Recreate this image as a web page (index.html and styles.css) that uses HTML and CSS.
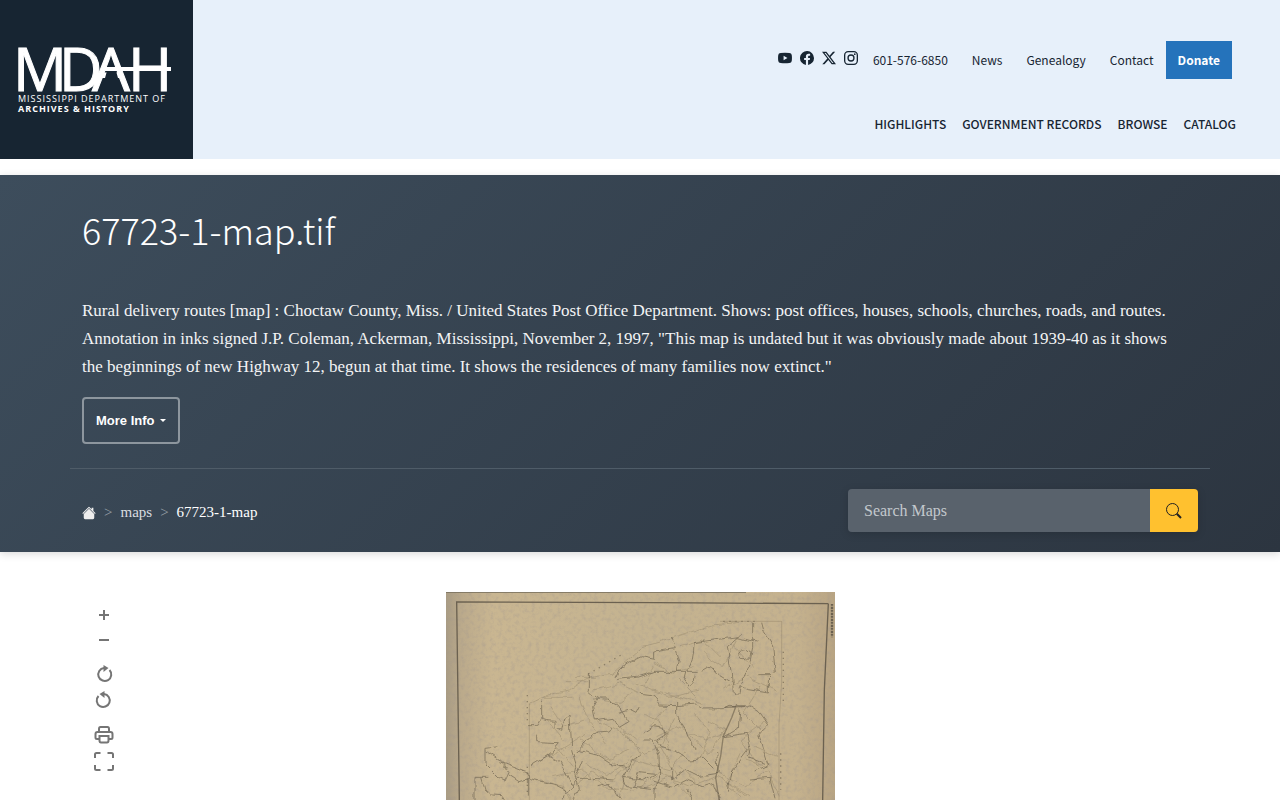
FILE: index.html
```
<!DOCTYPE html>
<html lang="en">
<head>
    <meta charset="UTF-8">
    <meta name="viewport" content="width=device-width, initial-scale=1.0">
    <title>67723-1-map.tif</title>
    <link rel="stylesheet" href="styles.css">
</head>
<body>
    <header class="site-header">
        <a class="logo" href="#">
            <svg width="193" height="159" viewBox="0 0 193 159">
                <text class="logo-name" x="13 59 92 128" y="91">MDAH</text>
                <path d="M107 71h9l2 7h-13z" fill="#172532"/>
                <path d="M105 69h66" stroke="#fff" stroke-width="4"/>
                <text class="logo-dept" x="18" y="102">MISSISSIPPI DEPARTMENT OF</text>
                <text class="logo-hist" x="18" y="112">ARCHIVES &amp; HISTORY</text>
            </svg>
        </a>
        <div class="header-links">
            <nav class="top-nav">
                <div class="social">
                    <a href="#" aria-label="YouTube"><svg viewBox="0 0 16 16"><path fill-rule="evenodd" d="M3 2.2Q8 1.7 13 2.2Q15.4 2.4 15.7 4.5Q16.2 8 15.7 11.5Q15.4 13.6 13 13.8Q8 14.3 3 13.8Q.6 13.6.3 11.5Q-.2 8 .3 4.5Q.6 2.4 3 2.2zM6.4 5.4v5.2l4.4-2.6z"/></svg></a>
                    <a href="#" aria-label="Facebook"><svg viewBox="0 0 16 16"><path d="M16 8.05A8 8 0 1 0 6.75 16v-5.6H4.72V8.05h2.03V6.27c0-2 1.2-3.12 3.02-3.12.88 0 1.8.16 1.8.16v1.98h-1.01c-1 0-1.31.62-1.31 1.26v1.5h2.22l-.35 2.33H9.25V16A8 8 0 0 0 16 8.05z"/></svg></a>
                    <a href="#" aria-label="X"><svg viewBox="0 0 16 16"><path fill-rule="evenodd" d="M12.6.75h2.45L9.7 6.9 16 15.25h-4.93l-3.86-5.06-4.42 5.06H.34l5.74-6.57L0 .75h5.06l3.5 4.63zm-.86 13.03h1.36L4.32 2.15H2.87z"/></svg></a>
                    <a href="#" aria-label="Instagram"><svg viewBox="0 0 16 16"><g fill="none" stroke="currentColor" stroke-width="1.5"><rect x=".75" y=".75" width="14.5" height="14.5" rx="4"/><circle cx="8" cy="8" r="3.4"/></g><circle cx="12.3" cy="3.7" r="1"/></svg></a>
                </div>
                <a href="tel:601-576-6850">601-576-6850</a>
                <a href="#">News</a>
                <a href="#">Genealogy</a>
                <a href="#">Contact</a>
                <a class="donate" href="#">Donate</a>
            </nav>
            <nav class="main-nav">
                <a href="#">Highlights</a>
                <a href="#">Government Records</a>
                <a href="#">Browse</a>
                <a href="#">Catalog</a>
            </nav>
        </div>
    </header>

    <section class="hero">
        <div class="container">
            <h1>67723-1-map.tif</h1>
            <p class="description">Rural delivery routes [map] : Choctaw County, Miss. / United States Post Office Department. Shows: post offices, houses, schools, churches, roads, and routes. Annotation in inks signed J.P. Coleman, Ackerman, Mississippi, November 2, 1997, "This map is undated but it was obviously made about 1939-40 as it shows the beginnings of new Highway 12, begun at that time. It shows the residences of many families now extinct."</p>
            <button class="more-info" type="button">More Info</button>
        </div>
        <div class="container hero-bar">
            <nav class="breadcrumb" aria-label="breadcrumb">
                <a href="#" aria-label="Home"><svg width="14" height="14" viewBox="0 0 16 16"><path d="M8.7 1.3a1 1 0 0 0-1.4 0L.4 8.2l.8.8L8 2.2 14.800 9l.8-.8L13 5.600V2h-2v1.600z"/><path d="M8 3l6 6V13.500a1.500 1.500 0 0 1-1.500 1.500h-9A1.500 1.500 0 0 1 2 13.500V9z"/></svg></a>
                <span>&gt;</span>
                <a href="#">maps</a>
                <span>&gt;</span>
                <a class="current" href="#">67723-1-map</a>
            </nav>
            <form class="search">
                <input type="text" placeholder="Search Maps" aria-label="Search Maps">
                <button type="submit" aria-label="Search"><svg width="16" height="16" viewBox="0 0 16 16"><circle cx="6.500" cy="6.500" r="6" fill="none" stroke="currentColor"/><path d="M10.800 10.800l4.200 4.200" stroke="currentColor" stroke-width="2"/></svg></button>
            </form>
        </div>
    </section>

    <main class="container viewer">
        <div class="tools">
            <button type="button" aria-label="Zoom in"><svg viewBox="0 0 20 20"><path d="M10 5v10M5 10h10"/></svg></button>
            <button type="button" aria-label="Zoom out"><svg viewBox="0 0 20 20"><path d="M5 9h10"/></svg></button>
            <button class="group" type="button" aria-label="Rotate right"><svg viewBox="0 0 20 20"><path d="M15.500 5A6.500 6.500 0 1 1 10 3"/><path class="solid" d="M9.500 0l5 3-5 4z"/></svg></button>
            <button type="button" aria-label="Rotate left"><svg viewBox="0 0 20 20"><path d="M4.500 5A6.500 6.500 0 1 0 10 3"/><path class="solid" d="M10.500 0l-5 3 5 4z"/></svg></button>
            <button class="group" type="button" aria-label="Print"><svg viewBox="0 0 20 20"><path d="M5 7V4Q5 2 6.500 2h7Q15 2 15 4V7M5 14H3Q1.500 14 1.500 12.500V9Q1.500 7 3.500 7h13q2 0 2 2v3.500Q18.500 14 17 14h-2M5.500 11h9V15.500q0 2-1.500 2H7q-1.500 0-1.500-2z"/></svg></button>
            <button type="button" aria-label="Full screen"><svg viewBox="0 0 20 20"><path d="M1 7V3.500Q1 2 2.500 2h4M13.500 2h4Q19 2 19 3.500V7M19 14v3.500q0 1.500-1.500 1.500h-4M6.500 19h-4Q1 19 1 17.500V14"/></svg></button>
        </div>
        <svg class="map" viewBox="18 36 1167 624" role="img" aria-label="Map of Choctaw County">
            <defs>
                <linearGradient id="paper" x2="1" y2="0">
                    <stop offset="0" stop-color="#a99c84"/>
                    <stop offset=".04" stop-color="#bbaa8b"/>
                    <stop offset=".12" stop-color="#c9b691"/>
                    <stop offset=".5" stop-color="#c4b390"/>
                    <stop offset=".9" stop-color="#c5b28e"/>
                    <stop offset="1" stop-color="#b8a483"/>
                </linearGradient>
                <filter id="grain" x="0" y="0" width="1" height="1">
                    <feTurbulence type="fractalNoise" baseFrequency=".08" numOctaves="3" seed="4"/>
                    <feColorMatrix values="0 0 0 0 .35  0 0 0 0 .3  0 0 0 0 .27  0 0 0 2 -.9"/>
                </filter>
                <filter id="wobble" x="-.1" y="-.1" width="1.2" height="1.2">
                    <feTurbulence type="fractalNoise" baseFrequency=".03" numOctaves="2" seed="7" result="noise"/>
                    <feDisplacementMap in="SourceGraphic" in2="noise" scale="20" xChannelSelector="R" yChannelSelector="G"/>
                </filter>
            </defs>
            <rect x="18" y="36" width="1167" height="624" fill="url(#paper)"/>
            <path d="M18 36h50v624H18zM1125 60h60v600h-60z" filter="url(#grain)" opacity=".4"/>
            <path d="M18 37h900" stroke="#7a7160" stroke-width="3"/>
            <g fill="none" stroke="#6b6150" stroke-width="4">
                <path d="M58 660L50 66l600 2 515 3"/>
                <path d="M1165 71l-12 260-5 329"/>
                <path d="M1176 72v100" stroke-dasharray="5 3 8 2" stroke-width="7"/>
            </g>
            <path class="border" d="M268 660V370M840 124h185v180l-8 130v226"/>
            <g class="streams" filter="url(#wobble)">
                <path d="M268 370q60-30 120-40l60-40 70-10 90-80 100-30 110-35 80-8"/>
                <path d="M310 352h90M380 305h60M408 292h60M640 330l60 15 90 25M300 540l60-30 80-50M420 480l80 60 70-30M320 420l50 60M650 470l60-30 90 40 60-20M720 430l80 90 60-70M850 330l70-40 90 40M880 200l60 60M790 220l60 40 40-80"/>
                <path d="M340 590l90-20 60 50 90 10 80-50 90 40 80-30 100 60M520 600l60-60 110 30 50-60M830 580l90 40 60-50 40 80M410 620l40-50 80 60"/>
                <path d="M470 420l80 40 60 60 60-20M540 440l60 80-30 60M610 400l60 40 20 70M700 420l-40 80 50 90M480 520l80 50-20 90M900 520l-40 90 60 40M980 420l-80 60 60 80"/>
                <path d="M330 380l40 60 60-20M420 350l30 80 50 60M590 310l90 40 100-20M460 330l80-20 60 30M640 250l60 30 60-20M300 600l70 20 20 40M440 550l60 40 80-60M760 400l50 60-30 80M800 420l60 30M620 620l70-30 60 60M780 620l-60-60M960 320l-50 80 60 60M940 500l70 30"/>
                <path d="M640 260l-30 60M720 200l70-20 50 50M480 360l60 10 40-30M350 500l50 60M590 480l-40-30M680 380l-50 60M860 620l40 30M980 560l-60-20M720 300l50 50"/>
            </g>
            <g class="roads" filter="url(#wobble)">
                <path d="M445 280v50l28 25-15 25 8 40 50-8 22 30 30-18-30-45-35-22h-40M538 400l30-10 20 10 10-20M524 290q6-30 80-60l40 8v-25l62-10-15-35M530 298l60-6 55-18h125M762 188l135-18"/>
                <path d="M762 188q0 60-20 80l-8 30 15 20 10-10 5-30M890 172l60 14M965 128l8 30 25 40 8 80"/>
                <path d="M780 275l30-18 20 22 48 30 2 30h20l5-20 20 10 60 10v-40l15-15-45 0M900 325l28-70 10-50v-80M893 225q15-30 40-5-5 25-30 18z"/>
                <path d="M862 200l40-34M862 200l12 80 3 30M707 210l10 35-5 30"/>
                <path d="M305 362v55l15 5 25 2v20l20 10 10-45 15-10 5 110 15 50-5 30 10 40-18 35-5 35M290 470v15l68 3-30 35-55 35M262 437h28l12-25M320 525l40 20 25 50 15 20"/>
                <path d="M405 518l15-12 40-45 45-5 10-15M410 510l60 15 40 25 60 12 10-20 20-15M570 562l-20 30 10 25 90 10M410 595h50l60 5"/>
                <path d="M135 505l40-5M135 505v50l40 40 20 8 12-25-25-35-45-30M175 545l90 35v70M207 585l30 20 30-10 80 20 30 15-8 29M105 660v-68h40M125 592l10 35 20 18 35 2 8 13"/>
                <path d="M600 340l40 5 20 30 50 2 60-5 20 15 60-1 20-10 60 2 30 20 25 35 2 0-30 30 30 90-40 20"/>
                <path d="M610 460l30-20 30 5 5 20-25 15 15 20 40 10 45 30 40-5 30 30M710 360v50l30 40 25 60M610 480l30 0 20 50 2 55-20 45v40M695 600l40-30 40 20 60-10-5-65M695 600v-40M640 600l60 20 40-20 50 20 30-10 20 50"/>
                <path d="M850 470l70-10 10 50-5 20 50 20M925 510l-50 65-10 60"/>
                <path d="M900 385l-5 60-40 25M470 620l40-10 30 50M550 592l60 8 40-20M380 640l30-40M580 620l20-45 45 5M740 630l20 30M930 600l60-5 15 60M430 540l-20 50"/>
            </g>
            <path class="railway" d="M890 373l-15 40-25 55-8 60-15 65 10 67M855 382l60-3"/>
            <path class="marks" d="M262 345v90M1030 215v150M1022 520v110M850 124h100M445 282l100-58M262 560v80"/>
        </svg>
    </main>
</body>
</html>
```
FILE: styles.css
```
* {
    box-sizing: border-box;
}
body {
    margin: 0;
    background: white;
    font-family: "Liberation Serif", serif;
    color: #172532;
}
a {
    color: inherit;
    text-decoration: none;
}
.site-header {
    display: flex;
    justify-content: space-between;
    background: #e7f0fa;
    margin-bottom: 16px;
    font-family: "Noto Sans CJK JP", sans-serif;
}
.logo {
    background: #172532;
}
.logo svg {
    display: block;
}
.logo text {
    fill: white;
    font-family: "Open Sans", sans-serif;
}
.logo .logo-name {
    font-size: 60px;
    stroke: white;
    stroke-width: 1px;
}
.logo .logo-dept {
    font-size: 9px;
    letter-spacing: 1px;
}
.logo .logo-hist {
    font-size: 9px;
    font-weight: bold;
    letter-spacing: 1px;
}
.header-links {
    display: flex;
    flex-direction: column;
    align-items: flex-end;
    padding: 41px 36px 0 0;
}
.top-nav {
    display: flex;
    align-items: center;
    padding-right: 12px;
    font-size: 12px;
    line-height: 38px;
}
.top-nav > a {
    padding: 0 12px;
}
.top-nav .donate {
    background: #2573bb;
    color: white;
    font-weight: bold;
}
.social {
    display: flex;
    gap: 8px;
    padding: 0 3px 4px 0;
}
.social a {
    display: flex;
}
.social svg {
    width: 14px;
    height: 14px;
    fill: currentColor;
}
.main-nav {
    display: flex;
    margin-top: 26px;
    font-size: 12px;
    font-weight: 500;
    line-height: 38px;
    text-transform: uppercase;
}
.main-nav a {
    padding: 0 8px;
}
.container {
    max-width: 1140px;
    margin: 0 auto;
    padding: 0 12px;
}
.hero {
    background: linear-gradient(135deg, #3d4d5c, #2c3540);
    color: white;
    padding-top: 29px;
    box-shadow: 0 2px 8px rgba(0, 0, 0, 0.15);
}
h1 {
    margin: 0 0 43px;
    font-family: "Noto Sans CJK JP", sans-serif;
    font-size: 36px;
    font-weight: 300;
    line-height: 50px;
}
.description {
    max-width: 1100px;
    margin: 0 0 16px;
    font-size: 17px;
    line-height: 28px;
    color: #f3f4f5;
}
.more-info {
    display: flex;
    align-items: center;
    height: 47px;
    margin-bottom: 24px;
    padding: 0 12px;
    background: transparent;
    border: 2px solid #8d969e;
    border-radius: 4px;
    color: white;
    font-family: "Liberation Sans", sans-serif;
    font-size: 13px;
    font-weight: bold;
}
.more-info::after {
    content: "";
    margin-left: 5px;
    border: 3px solid transparent;
    border-top-color: white;
    border-bottom: 0;
}
.hero-bar {
    display: flex;
    justify-content: space-between;
    align-items: center;
    padding: 20px 12px;
    border-top: 1px solid #4f5c68;
}
.breadcrumb {
    display: flex;
    align-items: center;
    gap: 8px;
    padding-top: 4px;
    font-size: 15px;
    color: #dadde0;
}
.breadcrumb span {
    color: #98a1a9;
}
.breadcrumb svg {
    display: block;
    fill: #eeeeee;
}
.breadcrumb .current {
    color: white;
}
.search {
    display: flex;
    width: 350px;
    height: 43px;
    border-radius: 4px;
    overflow: hidden;
    box-shadow: 0 2px 8px rgba(0, 0, 0, 0.15);
}
.search input {
    flex: 1;
    min-width: 0;
    padding: 0 16px;
    border: 0;
    background: #59626c;
    color: white;
    font-family: "Liberation Serif", serif;
    font-size: 16px;
}
.search input::placeholder {
    color: #c3c8cc;
}
.search button {
    display: flex;
    align-items: center;
    justify-content: center;
    width: 48px;
    border: 0;
    background: #ffc12f;
    color: #222222;
}
.viewer {
    display: grid;
    grid-template-columns: 1fr 389px 1fr;
    padding-top: 40px;
}
.tools {
    padding: 10px 12px 0;
}
.tools button {
    display: block;
    padding: 3px 0;
    border: 0;
    background: none;
}
.tools .group {
    margin-top: 8px;
}
.tools svg {
    display: block;
    width: 20px;
    height: 20px;
    fill: none;
    stroke: #757575;
    stroke-width: 2px;
}
.tools .solid {
    fill: #757575;
    stroke: none;
}
.map {
    display: block;
    width: 100%;
}
.border, .roads, .streams, .railway, .marks {
    fill: none;
    stroke: #554c3c;
    stroke-width: 3px;
    stroke-linejoin: round;
    opacity: 0.5;
}
.border, .streams {
    stroke-width: 2px;
    opacity: 0.3;
}
.railway {
    stroke-width: 4px;
}
.marks {
    stroke-width: 4px;
    stroke-dasharray: 4 14;
}
```
